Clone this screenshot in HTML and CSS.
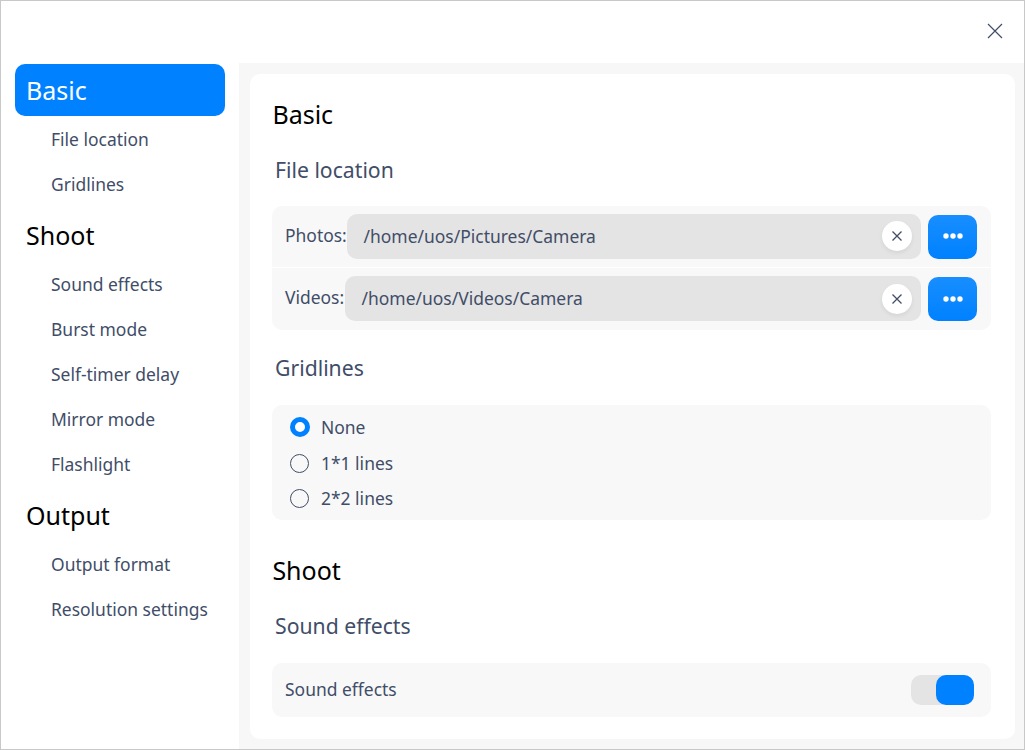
FILE: index.html
```html
<!DOCTYPE html>
<html lang="en">
<head>
<meta charset="utf-8">
<title>Settings</title>
<link rel="stylesheet" href="styles.css">
</head>
<body>
<div class="window">
  <header class="titlebar">
    <button class="close" aria-label="Close"><svg width="16" height="16" viewBox="0 0 16 16"><path d="M1 1L15 15M15 1L1 15"/></svg></button>
  </header>
  <div class="body">
    <nav class="sidebar">
      <section class="group">
        <div class="group-title active">Basic</div>
        <div class="nav-item">File location</div>
        <div class="nav-item">Gridlines</div>
      </section>
      <section class="group">
        <div class="group-title">Shoot</div>
        <div class="nav-item">Sound effects</div>
        <div class="nav-item">Burst mode</div>
        <div class="nav-item">Self-timer delay</div>
        <div class="nav-item">Mirror mode</div>
        <div class="nav-item">Flashlight</div>
      </section>
      <section class="group">
        <div class="group-title">Output</div>
        <div class="nav-item">Output format</div>
        <div class="nav-item">Resolution settings</div>
      </section>
    </nav>
    <main class="content">
      <div class="card">
        <h2 class="section-title">Basic</h2>
        <h3 class="sub-title">File location</h3>
        <div class="panel paths">
          <div class="path-row">
            <span class="path-label photos">Photos:</span>
            <div class="path-input"><span class="path-text">/home/uos/Pictures/Camera</span><button class="clear" aria-label="Clear"><svg width="12" height="12" viewBox="0 0 12 12"><path d="M1.5 1.5L10.5 10.5M10.5 1.5L1.5 10.5"/></svg></button></div>
            <button class="browse" aria-label="Browse"><svg width="20" height="6" viewBox="0 0 20 6"><circle cx="3" cy="3" r="2.7"/><circle cx="10" cy="3" r="2.7"/><circle cx="17" cy="3" r="2.7"/></svg></button>
          </div>
          <div class="path-row">
            <span class="path-label videos">Videos:</span>
            <div class="path-input"><span class="path-text">/home/uos/Videos/Camera</span><button class="clear" aria-label="Clear"><svg width="12" height="12" viewBox="0 0 12 12"><path d="M1.5 1.5L10.5 10.5M10.5 1.5L1.5 10.5"/></svg></button></div>
            <button class="browse" aria-label="Browse"><svg width="20" height="6" viewBox="0 0 20 6"><circle cx="3" cy="3" r="2.7"/><circle cx="10" cy="3" r="2.7"/><circle cx="17" cy="3" r="2.7"/></svg></button>
          </div>
        </div>
        <h3 class="sub-title after-panel">Gridlines</h3>
        <div class="panel options">
          <div class="option"><span class="radio checked"></span>None</div>
          <div class="option"><span class="radio"></span>1*1 lines</div>
          <div class="option"><span class="radio"></span>2*2 lines</div>
        </div>
        <h2 class="section-title next">Shoot</h2>
        <h3 class="sub-title">Sound effects</h3>
        <div class="panel switch-row"><span class="switch-label">Sound effects</span><span class="switch"><span class="knob"></span></span></div>
      </div>
    </main>
  </div>
</div>
</body>
</html>
```
FILE: styles.css
```css
* { box-sizing: border-box; }
body {
  margin: 0;
  font-family: "Noto Sans", sans-serif;
  font-size: 17.47px;
  color: #414d68;
}
button { border: 0; padding: 0; display: flex; align-items: center; justify-content: center; }
svg { display: block; }
.window {
  width: 1025px;
  height: 750px;
  border: 1px solid #c8c8c8;
  background: #fff;
  display: flex;
  flex-direction: column;
  overflow: hidden;
}
.titlebar { height: 62px; flex: none; display: flex; justify-content: flex-end; align-items: center; padding: 0 21px 2px 0; }
.close { background: none; }
.close svg { fill: none; stroke: #414d68; stroke-width: 1.2; }
.body { flex: 1; display: flex; min-height: 0; }
.sidebar { width: 238px; padding: 1px 14px 0; }
.group { margin-bottom: 2px; }
.group-title {
  height: 52px;
  line-height: 52px;
  margin-bottom: 1px;
  padding-left: 11px;
  font-size: 25px;
  color: #000;
  border-radius: 10px;
}
.group-title.active { background: #0081ff; color: #fff; }
.nav-item { height: 45px; line-height: 44px; padding-left: 36px; white-space: nowrap; }
.content { flex: 1; background: #f7f7f7; padding: 11px 9px 10px 11px; }
.card { height: 665px; background: #fff; border-radius: 10px; padding: 23px 24px 0 22px; }
.section-title { margin: 0; height: 34px; line-height: 34px; padding-left: .4px; font-size: 25px; font-weight: 400; color: #000; }
.section-title.next { margin-top: 33px; }
.section-title.next + .sub-title { height: 76px; }
.sub-title { margin: 0; height: 75px; line-height: 77px; padding-left: 3px; font-size: 21.2px; font-weight: 400; }
.sub-title.after-panel { line-height: 75px; }
.panel { background: #f8f8f8; border-radius: 10px; }
.paths { height: 124px; }
.path-row { height: 61px; display: flex; align-items: flex-start; padding: 8px 14px 0 13px; }
.path-row + .path-row { height: 63px; border-top: 1px solid #fff; }
.path-label { line-height: 43px; }
.photos { width: 62px; }
.videos { width: 60px; }
.path-input {
  flex: 1;
  height: 45px;
  display: flex;
  align-items: center;
  justify-content: space-between;
  padding: 0 9px 0 16.5px;
  border-radius: 10px;
  background: #e4e4e4;
}
.path-text { padding-bottom: 1px; }
.clear { width: 30px; height: 30px; margin-bottom: 1px; border-radius: 50%; background: #fff; box-shadow: 0 2px 4px rgba(0, 0, 0, .07); }
.path-row + .path-row .clear { margin: 1px 0 0; }
.clear svg { fill: none; stroke: #414d68; stroke-width: 1.3; }
.browse { width: 49px; height: 44px; margin: 1px 0 0 7px; padding: 0 0 2px 1px; border-radius: 10px; background: linear-gradient(#188eff, #0081ff); }
.path-row + .path-row .browse { padding-bottom: 0; }
.browse svg { fill: #fff; }
.options { height: 115px; padding-top: 4px; }
.option { height: 35px; display: flex; align-items: center; gap: 12px; padding-left: 18px; }
.option:nth-child(1) { height: 36.5px; }
.option:nth-child(2) { height: 35.5px; }
.option:nth-child(3) { padding-bottom: 1px; }
.radio { width: 19px; height: 19px; border-radius: 50%; border: 1px solid #414d68; }
.radio.checked { width: 20px; height: 20px; margin-right: -1px; border: 5px solid #0081ff; background: #fff; }
.switch-row { height: 54px; display: flex; align-items: center; justify-content: space-between; padding: 0 17px 0 13px; }
.switch-label { padding-bottom: 2px; }
.switch { width: 63px; height: 30px; border-radius: 10px; background: #e4e4e4; display: flex; justify-content: flex-end; }
.knob { width: 38px; height: 30px; border-radius: 10px; background: #0081ff; }
```
